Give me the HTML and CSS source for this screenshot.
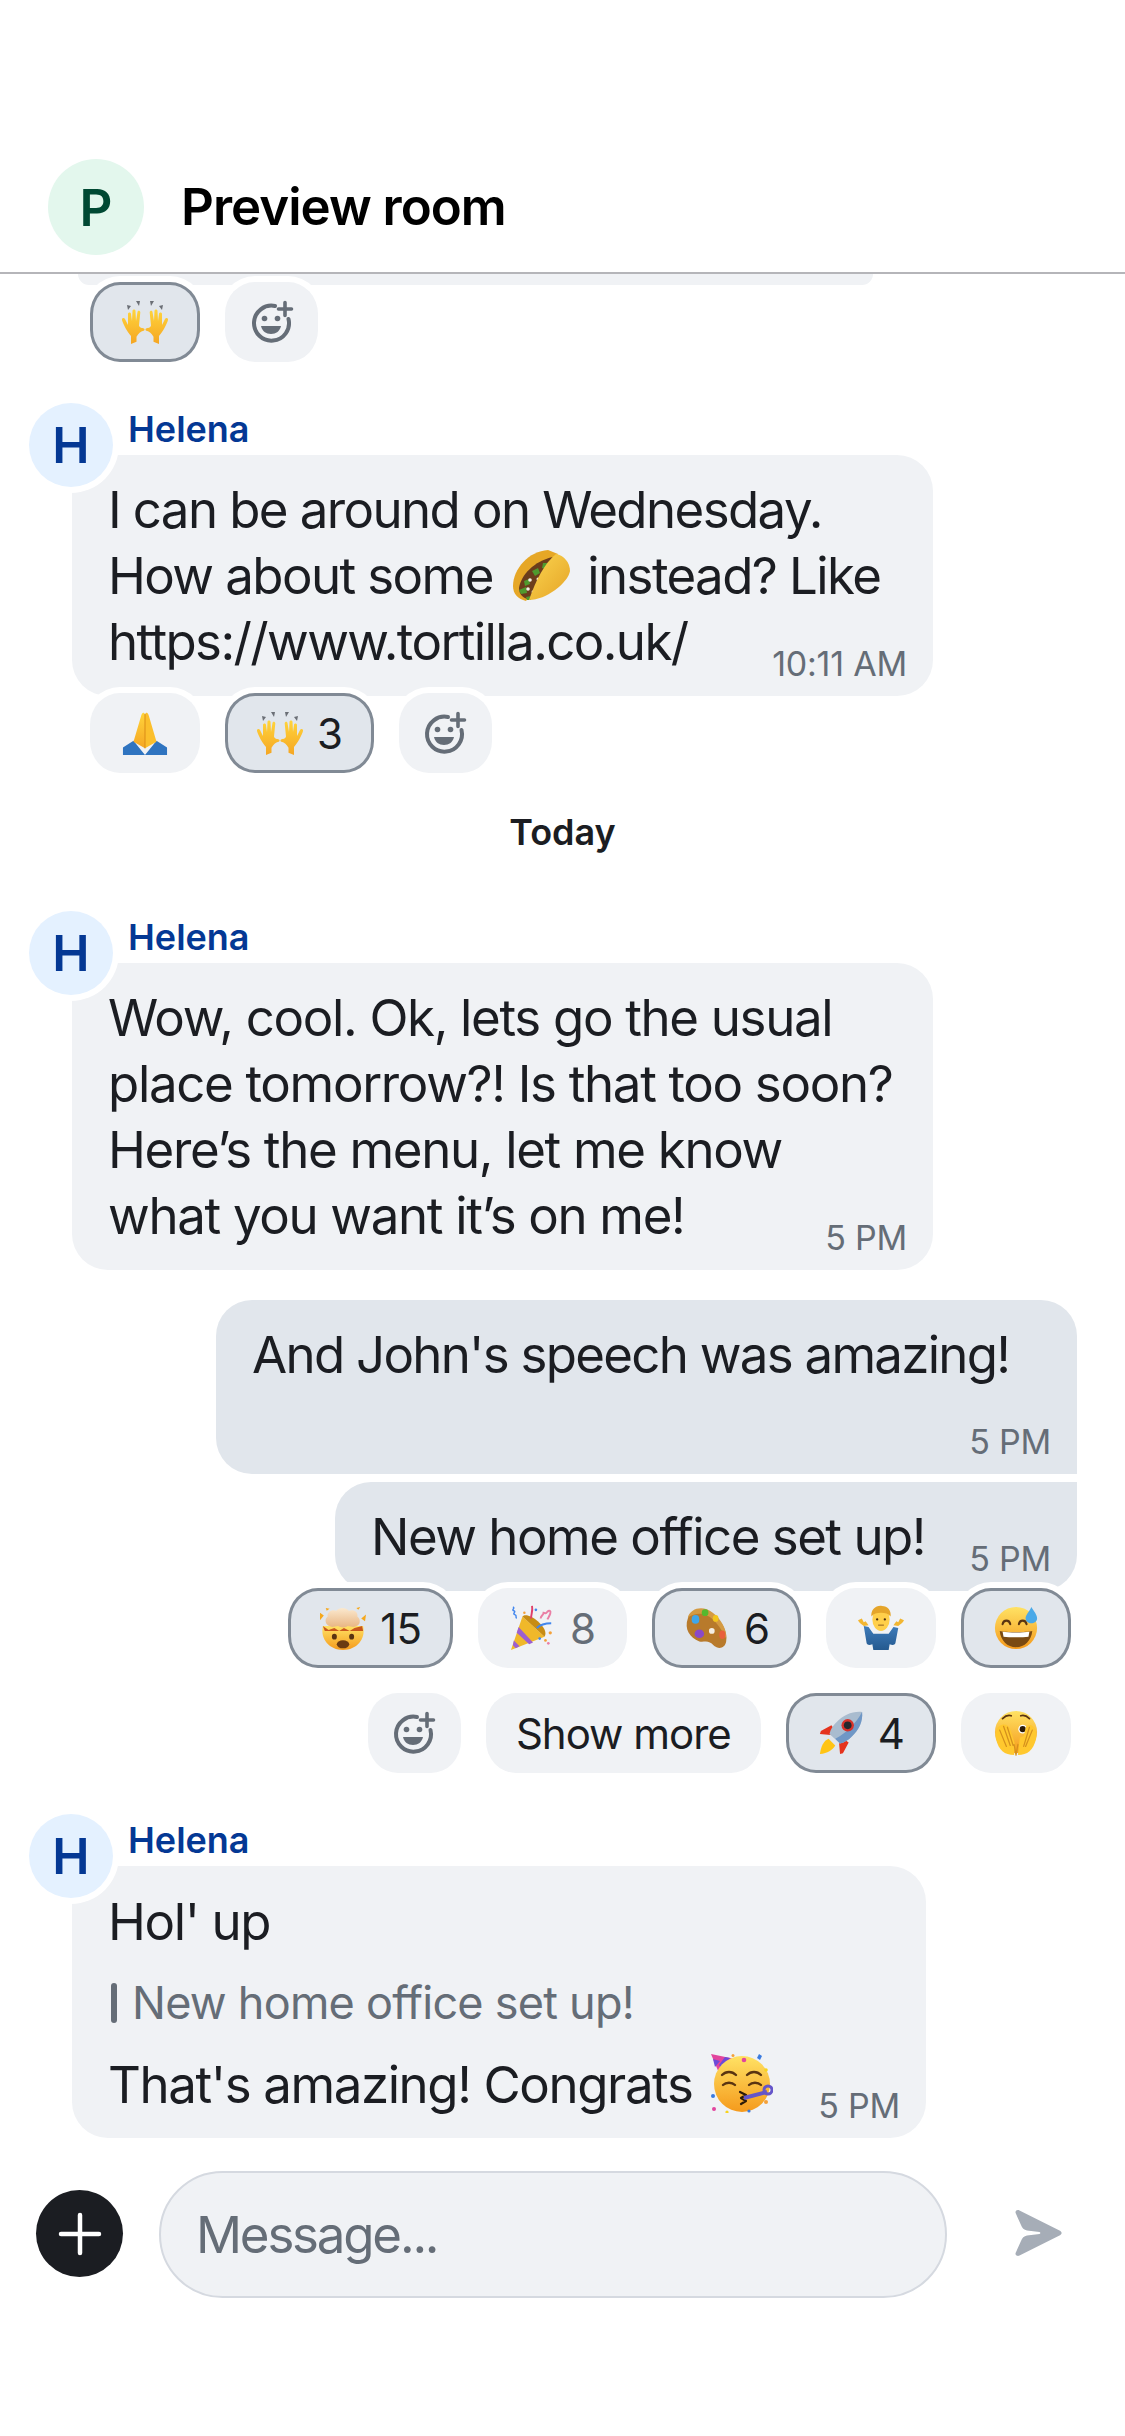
FILE: index.html
```html
<!DOCTYPE html>
<html lang="en">
<head>
<meta charset="utf-8">
<title>Preview room</title>
<link rel="stylesheet" href="styles.css">
</head>
<body>
<svg class="defs" width="0" height="0" aria-hidden="true">
  <defs>
    <linearGradient id="skin" x1="0" y1="0" x2="0" y2="1"><stop offset="0" stop-color="#ffd43b"/><stop offset="1" stop-color="#f5a623"/></linearGradient>
    <linearGradient id="face" x1="0" y1="0" x2="0" y2="1"><stop offset="0" stop-color="#ffe264"/><stop offset="1" stop-color="#f59a1c"/></linearGradient>
    <linearGradient id="shell" x1="0" y1="0" x2="1" y2="1"><stop offset="0" stop-color="#fbd651"/><stop offset="1" stop-color="#e5a325"/></linearGradient>
    <linearGradient id="cream" x1="0" y1="0" x2="0" y2="1"><stop offset="0" stop-color="#fbe9cf"/><stop offset="1" stop-color="#e8b582"/></linearGradient>
    <linearGradient id="blue" x1="0" y1="0" x2="0" y2="1"><stop offset="0" stop-color="#3e7cba"/><stop offset="1" stop-color="#24598f"/></linearGradient>
    <symbol id="e-hands" viewBox="1 1 46 46">
      <g fill="#6b6f76"><path d="M6 7l4 1-3 4zM15 3l4 0-1 5zM29 3l4 0-3 5zM42 7l-4 1 3 4z"/></g>
      <path fill="url(#skin)" d="M10 46v-8c-3-3-8-12-9-16-.5-2 2-3 3-1l3 6 0-11c0-2 3-2 3 0l1 7 .5-10c0-2 3-2 3 0l.5 10 1.500-9c.3-2 3-1.500 2.800.5l-1.300 13c1 3 3 2 5 3 1 .5.500 2-.5 2.200-3 .5-5 3-7 6v5z"/>
      <path fill="url(#skin)" d="M38 46v-8c3-3 8-12 9-16 .5-2-2-3-3-1l-3 6 0-11c0-2-3-2-3 0l-1 7-.5-10c0-2-3-2-3 0l-.5 10-1.500-9c-.3-2-3-1.500-2.800.5l1.300 13c-1 3-3 2-5 3-1 .5-.500 2 .5 2.200 3 .5 5 3 7 6v5z"/>
    </symbol>
    <symbol id="e-pray" viewBox="0 0 48 48">
      <path fill="#2f74c0" d="M1 47v-8l11-7 12 15zM47 47v-8l-11-7-12 15z"/>
      <path fill="url(#skin)" d="M24 40L12 33l8-27c.5-3 3-5 4-1z"/>
      <path fill="#fbbf2c" d="M24 40l12-7-8-27c-.5-3-3-5-4-1z"/>
      <path fill="none" stroke="#d98b16" stroke-width="1" d="M24 4v36"/>
    </symbol>
    <symbol id="e-taco" viewBox="0 0 58 53">
      <path fill="#e6a726" d="M1 37C1 20 17 2 36 1l10 4-32 47C6 50 1 45 1 37z"/>
      <path fill="#6b3d1c" d="M7 39C9 26 22 12 41 8L20 49c-6 3-13-2-13-10z"/>
      <g fill="#4f9a2e"><path d="M20 22l6-3 2 5-5 3zM31 14l6 0-2 6-5-1zM7 41l7-3 1 6-6 1zM12 32l5-2 1 5-5 2zM14 48l5-1 0 4-4 0z"/></g>
      <g fill="#f3f1e8"><circle cx="18" cy="31" r="1.800"/><circle cx="26" cy="30" r="1.500"/><circle cx="16" cy="40" r="1.800"/><circle cx="21" cy="43" r="1.400"/></g>
      <path fill="url(#shell)" d="M17 51C24 31 32 15 44 5c8 1 14 9 14 17-2 12-24 29-41 29z"/>
    </symbol>
    <symbol id="e-head" viewBox="0 0 48 48">
      <path fill="url(#face)" d="M3 22h42c3 14-7 25-21 25S0 36 3 22z"/>
      <path fill="#c9571c" d="M3 22l6 4 6-2 5 3 5-3 6 3 5-3 8-2 1 5-8 0-8 0-8 0-8 0-8 0-2-5z"/>
      <ellipse cx="15" cy="33" rx="2.600" ry="3" fill="#5a3411"/><ellipse cx="33" cy="33" rx="2.600" ry="3" fill="#5a3411"/>
      <ellipse cx="24" cy="41" rx="6.500" ry="4.200" fill="#6a3a12"/>
      <path fill="url(#cream)" d="M10 22c-4-1-6-7-2-10-1-5 5-8 9-6 3-4 10-4 13 0 5-2 10 1 9 6 4 3 3 9-1 10-3 2-7 0-9 0-3 2-7 2-10 0-3 0-6 2-9 0z"/>
      <path fill="#f6a81c" d="M0 8l4 3-4 5zM43 14l5-4-1 7zM38 3l4-1-2 3zM6 3l4 1-3 2z"/>
    </symbol>
    <symbol id="e-popper" viewBox="0 0 48 48">
      <path fill="#f0b82a" d="M1 47L13 12l23 21z"/>
      <path fill="#c78c14" d="M13 12l23 21c3-4-1-11-7-16-6-5-13-8-16-5z"/>
      <path fill="#9c5fd0" d="M9 23l15 16-4 2L7 29zM4 37l6 6-4 2-3-3z"/>
      <path fill="none" stroke="#e0406a" stroke-width="2" d="M22 14c0-5 2-7 1-13"/>
      <path fill="none" stroke="#4186ee" stroke-width="2" d="M28 24c4-4 9-5 15-5"/>
      <path fill="none" stroke="#4186ee" stroke-width="1.500" d="M3 2c3 1-2 3 1 4 3 1-2 3 1 4 3 1 0 3 2 4"/>
      <path fill="none" stroke="#ea7fa5" stroke-width="2" d="M32 14c0-3 3-3 3-6 2 0 2 2 4-1 2-2 4-1 3 2-1 3-2 4-3 6"/>
      <g fill="#f4a13a"><circle cx="42" cy="29" r="1.700"/><circle cx="37" cy="37" r="1.400"/></g>
      <circle cx="40" cy="40" r="1.400" fill="#ea7fa5"/><circle cx="27" cy="5" r="1.400" fill="#4186ee"/><circle cx="31" cy="35" r="1.400" fill="#4186ee"/><circle cx="15" cy="8" r="1.300" fill="#f4a13a"/>
    </symbol>
    <symbol id="e-palette" viewBox="0 0 48 48">
      <path fill="#b87a2b" d="M4 14C7 4 20 1 30 9c9 7 16 19 14 29-1 6-6 8-10 6-3-1-4-4-7-5-4-2-7 0-11-1C6 34 0 25 4 14z"/>
      <path fill="#d49a42" d="M4 13C7 3 20 0 30 8c8 6 15 17 14 27-6-12-12-20-20-24-7-3-13-2-20 2z"/>
      <ellipse cx="12" cy="15" rx="4" ry="4.500" fill="#3fa6e8"/><ellipse cx="22" cy="8" rx="3.500" ry="3.500" fill="#56b82e"/><ellipse cx="33" cy="14" rx="3" ry="3.500" fill="#f2c41c"/>
      <ellipse cx="40" cy="31" rx="3.200" ry="4.500" fill="#e85f3c"/><ellipse cx="16" cy="30" rx="5" ry="4.500" fill="#8a49c9"/><ellipse cx="29" cy="27" rx="3" ry="3" fill="#f4efe4"/>
    </symbol>
    <symbol id="e-shrug" viewBox="0 0 48 48">
      <path fill="url(#blue)" d="M6 22l5 1 5 7h16l5-7 5 1-3 16c-1 2-3 2-6 1l-1 6H16l-1-6c-3 1-5 1-6-1z"/>
      <path fill="#f2b632" d="M0 16c1 3 4 4 6 6l5-1-3-4-2 1-2-4zM48 16c-1 3-4 4-6 6l-5-1 3-4 2 1 2-4z"/>
      <ellipse cx="24" cy="15" rx="9" ry="12" fill="#ffcf4a"/>
      <path fill="#e5a52a" d="M14 12c-1-7 5-12 11-11 6 0 10 5 9 11-2-3-6-4-10-4-4 0-8 1-10 4z"/>
      <circle cx="20" cy="15" r="1.200" fill="#4a2c0f"/><circle cx="28" cy="15" r="1.200" fill="#4a2c0f"/>
      <path fill="none" stroke="#8a5a20" stroke-width="1" d="M21 21h6"/>
    </symbol>
    <symbol id="e-sweat" viewBox="0 0 48 48">
      <circle cx="24" cy="24" r="22" fill="url(#face)"/>
      <path fill="#7a4a12" d="M7 27c6 1.500 28 1.500 34 0-1 10-8 17-17 17S8 37 7 27z"/>
      <path fill="#fff" d="M10 28c6 1 22 1 28 0l-1 5c-6 1-20 1-26 0z"/>
      <path fill="none" stroke="#5a3411" stroke-width="2.200" stroke-linecap="round" d="M10 20c1-5 7-5 8 0M27 20c1-5 7-5 8 0"/>
      <path fill="#4aa9e8" d="M40 2c3 5 6 8 6 12 0 3-3 5-6 5s-6-2-6-5c0-4 4-7 6-12z"/>
    </symbol>
    <symbol id="e-rocket" viewBox="0 0 48 48">
      <path fill="#e5331d" d="M14 16L3 22l-1 3 11 1 4-6zM32 34l-6 11-3 1-1-11 6-4z"/>
      <path fill="#ffc414" d="M11 30c-5 2-8 8-9 16 8-1 13-4 16-9z"/>
      <path fill="#a9bccf" d="M46 2c1 10-3 18-11 26-3 3-7 6-12 7L12 25c1-5 4-9 7-12C27 5 36 1 46 2z"/>
      <path fill="#6f97c6" d="M46 2c1 10-3 18-11 26-3 3-7 6-12 7l-5-5C31 23 40 13 46 2z"/>
      <circle cx="31" cy="16" r="6.500" fill="#d8322a"/><circle cx="31" cy="16" r="4" fill="#24272c"/>
    </symbol>
    <symbol id="e-peek" viewBox="0 0 48 48">
      <circle cx="24" cy="23" r="22" fill="url(#face)"/>
      <path fill="none" stroke="#5a3411" stroke-width="1.800" stroke-linecap="round" d="M10 9c3-3 6-4 9-3M29 6c3-1 6 0 9 3"/>
      <circle cx="31" cy="20" r="4.600" fill="#fff"/><circle cx="31" cy="20" r="3.200" fill="#2c1a08"/>
      <path fill="#ffc82e" d="M22 47C12 47 6 42 3 30c-1-6 1-12 5-14 4-2 8 0 10 4l5 16z"/>
      <path fill="#ffc82e" d="M26 47c10 0 16-5 19-17 1-6-1-12-5-14-3-1-5 0-6 3l-2 8-4 2-1 8z"/>
      <path fill="none" stroke="#d4901d" stroke-width="1.300" stroke-linecap="round" d="M7 21l7 17M11 17l7 20M15 18l6 19M41 21l-7 17M38 18l-6 20M22 36l2 11M26 36l-2 11"/>
    </symbol>
    <symbol id="e-party" viewBox="0 0 62 59">
      <path fill="#e2459d" d="M0 0l24 5L8 19z"/>
      <path fill="#6d4bd8" d="M2 5l7 2-5 6zM14 3l5 1-9 10-2-3z"/>
      <circle cx="31" cy="30" r="28" fill="url(#face)"/>
      <path fill="none" stroke="#5a3411" stroke-width="2.400" stroke-linecap="round" d="M11 21c4-4 10-4 14 0M36 21c4-4 10-4 14 0M12 31c3-3 9-3 12 0M38 31c3-3 9-3 12 0"/>
      <path fill="none" stroke="#2c1a08" stroke-width="2.200" stroke-linecap="round" stroke-linejoin="round" d="M29 38l6 3-5 3 5 3-5 3"/>
      <path fill="none" stroke="#6555c9" stroke-width="4" d="M33 44l23-6"/>
      <circle cx="57" cy="36" r="4" fill="none" stroke="#6555c9" stroke-width="3"/>
      <circle cx="33" cy="6" r="2.300" fill="#e2459d"/><circle cx="3" cy="55" r="2" fill="#e2459d"/>
      <circle cx="22" cy="1.500" r="1.500" fill="#f4a13a"/><circle cx="55" cy="48" r="2" fill="#f4a13a"/>
      <path fill="#3a7be0" d="M48 0l3 2-2 4-3-2z"/><circle cx="2" cy="42" r="2" fill="#3a7be0"/><circle cx="38" cy="57" r="1.600" fill="#3a7be0"/>
      <circle cx="16" cy="58" r="1.600" fill="#f7d41f"/><circle cx="55" cy="16" r="1.800" fill="#f7d41f"/>
    </symbol>
    <symbol id="i-add-react" viewBox="0 0 44 44">
      <path fill="none" stroke="#656d77" stroke-width="4" stroke-linecap="round" d="M25 6a17.500 17.500 0 1 0 13.500 13"/>
      <path fill="none" stroke="#656d77" stroke-width="3.600" stroke-linecap="round" d="M35 2.500v13M28.500 9h13"/>
      <circle cx="14.500" cy="18.500" r="2.800" fill="#656d77"/><circle cx="27.500" cy="18.500" r="2.800" fill="#656d77"/>
      <path fill="#656d77" d="M11 26h20c-1 5-5 8-10 8s-9-3-10-8z"/>
    </symbol>
  </defs>
</svg>

<main class="screen">
  <header class="topbar">
    <span class="room-avatar">P</span>
    <h1 class="room-name">Preview room</h1>
  </header>

  <section class="timeline">
    <div class="bubble-stub"></div>
    <div class="reactions reactions-in">
      <span class="chip chip-on"><svg class="emoji"><use href="#e-hands"/></svg></span>
      <span class="chip chip-add"><svg class="add-icon"><use href="#i-add-react"/></svg></span>
    </div>

    <article class="message message-first">
      <div class="sender"><span class="avatar">H</span><span class="sender-name">Helena</span></div>
      <div class="bubble bubble-in bubble-wide">
        I can be around on Wednesday.<br>
        How about some <svg class="emoji-inline taco"><use href="#e-taco"/></svg> instead? Like<br>
        https://www.tortilla.co.uk/
        <time class="stamp">10:11 AM</time>
      </div>
      <div class="reactions reactions-in">
        <span class="chip"><svg class="emoji"><use href="#e-pray"/></svg></span>
        <span class="chip chip-on"><svg class="emoji"><use href="#e-hands"/></svg><span class="count">3</span></span>
        <span class="chip chip-add"><svg class="add-icon"><use href="#i-add-react"/></svg></span>
      </div>
    </article>

    <div class="day">Today</div>

    <article class="message">
      <div class="sender"><span class="avatar">H</span><span class="sender-name">Helena</span></div>
      <div class="bubble bubble-in bubble-wide bubble-loose">
        Wow, cool. Ok, lets go the usual<br>
        place tomorrow?! Is that too soon?<br>
        Here’s the menu, let me know<br>
        what you want it’s on me!
        <time class="stamp">5 PM</time>
      </div>
    </article>

    <article class="own-group">
      <div class="bubble bubble-own bubble-own-first">
        And John's speech was amazing!
        <time class="stamp">5 PM</time>
      </div>
      <div class="bubble bubble-own bubble-own-last">
        New home office set up!
        <time class="stamp">5 PM</time>
      </div>
      <div class="reactions reactions-own">
        <span class="chip chip-on"><svg class="emoji"><use href="#e-head"/></svg><span class="count">15</span></span>
        <span class="chip"><svg class="emoji"><use href="#e-popper"/></svg><span class="count count-muted">8</span></span>
        <span class="chip chip-on"><svg class="emoji"><use href="#e-palette"/></svg><span class="count">6</span></span>
        <span class="chip"><svg class="emoji"><use href="#e-shrug"/></svg></span>
        <span class="chip chip-on"><svg class="emoji"><use href="#e-sweat"/></svg></span>
        <span class="chip chip-add"><svg class="add-icon"><use href="#i-add-react"/></svg></span>
        <span class="chip chip-more">Show more</span>
        <span class="chip chip-on"><svg class="emoji"><use href="#e-rocket"/></svg><span class="count">4</span></span>
        <span class="chip"><svg class="emoji"><use href="#e-peek"/></svg></span>
      </div>
    </article>

    <article class="message message-last">
      <div class="sender"><span class="avatar">H</span><span class="sender-name">Helena</span></div>
      <div class="bubble bubble-in bubble-reply">
        <p class="reply-line">Hol' up</p>
        <p class="reply-quote">New home office set up!</p>
        <p class="reply-line">That's amazing! Congrats <svg class="emoji-inline party"><use href="#e-party"/></svg></p>
        <time class="stamp">5 PM</time>
      </div>
    </article>
  </section>

  <footer class="composer">
    <button class="plus" type="button" aria-label="Add">
      <svg viewBox="0 0 44 44" width="44" height="44"><path fill="none" stroke="#fff" stroke-width="4.500" stroke-linecap="round" d="M22 3v38M3 22h38"/></svg>
    </button>
    <div class="field">Message...</div>
    <svg class="send" viewBox="0 0 47 46" width="47" height="46" aria-label="Send">
      <path fill="#a6adb7" d="M.6 3C0 .5 2.500-.5 4.500.5L44.500 20.500c2.800 1.300 2.800 3.700 0 5L4.500 45.500C2.500 46.500 0 45.500.6 43L6 31c1-3 3-5 6-5.500L24.500 24c1.200-.3 1.200-1.700 0-2L12 20.500c-3-.5-5-2.500-6-5.500z"/>
    </svg>
  </footer>
</main>
</body>
</html>
```

FILE: styles.css
```css
* { box-sizing: border-box; }
html, body { margin: 0; padding: 0; background: #fff; }
body { font-family: Inter, "Noto Sans", sans-serif; color: #1b1d22; }
.defs { position: absolute; }
p { margin: 0; }

.screen { width: 1125px; height: 2436px; display: flex; flex-direction: column; overflow: hidden; }

.topbar { height: 274px; padding: 159px 0 0 48px; display: flex; align-items: flex-start; gap: 37px; border-bottom: 2px solid #b5b5b9; flex: none; }
.room-avatar { width: 96px; height: 96px; border-radius: 50%; background: #e3f7ed; color: #004933; font-size: 51px; font-weight: 600; display: flex; align-items: center; justify-content: center; }
.room-name { margin: 0; height: 96px; line-height: 96px; font-size: 51px; font-weight: 600; letter-spacing: -1px; color: #000; }

.timeline { flex: 1; display: flex; flex-direction: column; align-items: stretch; }

.bubble-stub { width: 795px; height: 11px; margin-left: 78px; background: #f0f2f5; border-radius: 0 0 30px 30px; flex: none; }

.reactions { display: flex; flex-wrap: wrap; gap: 25px; position: relative; }
.reactions-in { padding-left: 90px; margin-top: -3px; }
.reactions-own { justify-content: flex-end; padding: 0 54px 0 270px; margin-top: -3px; }

.chip { height: 80px; min-width: 93px; padding: 0 32px; border-radius: 30px / 32px; background: #f0f2f5; box-shadow: 0 0 0 6px #fff; display: inline-flex; align-items: center; justify-content: center; gap: 14px; font-size: 42px; letter-spacing: -1px; color: #1b1d22; }
.chip-on { background: #e1e6ec; border: 3px solid #818a95; padding: 0 29px; }
.chip-add { padding: 0; }
.chip-more { padding: 0 30px; }
.count-muted { color: #656d77; }
.emoji { width: 46px; height: 46px; flex: none; }
.add-icon { width: 44px; height: 44px; }

.message { display: flex; flex-direction: column; }
.message-first { margin-top: 41px; }
.message-last { margin-top: 41px; }

.sender { height: 52px; position: relative; padding-left: 128px; }
.avatar { position: absolute; z-index: 1; left: 29px; top: 0; width: 84px; height: 84px; border-radius: 50%; background: #e4f1ff; color: #043894; font-size: 50px; font-weight: 600; box-shadow: 0 0 0 6px #fff; display: flex; align-items: center; justify-content: center; }
.sender-name { font-size: 36px; line-height: 52px; font-weight: 600; color: #043894; display: block; }

.bubble { position: relative; font-size: 51px; line-height: 66px; letter-spacing: -1.6px; border-radius: 36px; }
.bubble-in { margin-left: 72px; background: #f0f2f5; padding: 22px 36px 21px; }
.bubble-wide { width: 861px; }
.bubble-loose { letter-spacing: -1.33px; }
.bubble-reply { width: 854px; padding: 23px 36px 20px; letter-spacing: -1.4px; }
.bubble-own { align-self: flex-end; margin-right: 48px; background: #e1e6ec; padding: 22px 36px; }
.bubble-own-first { width: 861px; height: 174px; border-radius: 36px 36px 0 36px; letter-spacing: -1.72px; }
.bubble-own-last { width: 742px; height: 109px; margin-top: 8px; border-radius: 36px 0 36px 36px; letter-spacing: -1.5px; }

.stamp { position: absolute; right: 26px; bottom: 10px; font-size: 34px; line-height: 44px; letter-spacing: -0.2px; color: #656d77; }

.emoji-inline { vertical-align: -8px; }
.taco { width: 58px; height: 53px; margin: 0 5px 0 6px; }
.party { width: 62px; height: 59px; margin-left: 6px; vertical-align: -10px; }

.day { height: 138px; padding-top: 31px; text-align: center; font-size: 36px; font-weight: 600; line-height: 56px; }

.own-group { display: flex; flex-direction: column; margin-top: 30px; }

.reply-quote { margin: 19px 0 20px; padding-left: 24px; position: relative; color: #656d77; font-size: 45px; line-height: 58px; letter-spacing: -0.75px; }
.reply-quote::before { content: ""; position: absolute; left: 3px; top: 9px; bottom: 9px; width: 6px; border-radius: 3px; background: #656d77; }

.composer { flex: none; height: 286px; padding: 21px 0 0 36px; display: flex; align-items: flex-start; }
.plus { width: 87px; height: 87px; margin-top: 19px; padding: 0; border: 0; border-radius: 50%; background: #1b1d22; display: flex; align-items: center; justify-content: center; flex: none; }
.field { width: 788px; height: 127px; margin-left: 36px; padding-left: 35px; border: 2px solid #d5d9e0; border-radius: 64px; background: #f0f2f5; color: #656d77; font-size: 51px; line-height: 123px; letter-spacing: -2.2px; flex: none; }
.send { margin: 39px 0 0 68px; flex: none; }
```
